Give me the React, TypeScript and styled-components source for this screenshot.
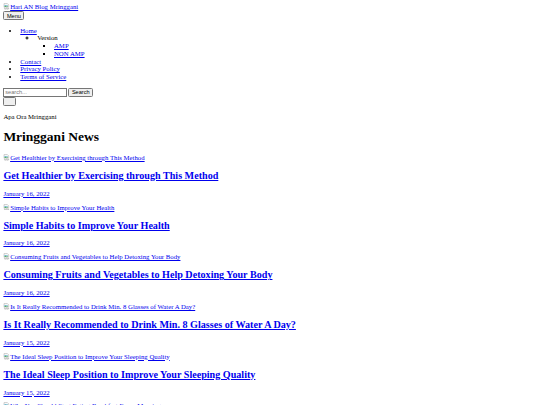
import styled, { createGlobalStyle } from "styled-components";

const GlobalStyle = createGlobalStyle`
  html {
    zoom: 0.421875;
  }
  body {
    margin: 8px;
    font-family: "Liberation Serif", "Times New Roman", serif;
    font-size: 16px;
    line-height: 1.15;
    color: #000;
    background: #fff;
  }
`;

const Link = styled.a`
  color: #0000ee;
  text-decoration: underline;
  cursor: pointer;
`;

const Header = styled.header`
  display: block;
`;

const Button = styled.button`
  font-family: "Liberation Sans", Arial, sans-serif;
  font-size: 13.333px;
  line-height: normal;
`;

const IconButton = styled(Button)`
  display: block;
  width: 31px;
  height: 22px;
`;

const List = styled.ul<{ $type: string; $top?: boolean }>`
  list-style-type: ${(p) => p.$type};
  margin: ${(p) => (p.$top ? "16px 0" : "0")};
  padding-left: 40px;
`;

const Bare = styled.li`
  list-style: none;
`;

const Form = styled.form`
  display: block;
  margin: 0;
`;

const Input = styled.input`
  font-family: "Liberation Sans", Arial, sans-serif;
  font-size: 13.333px;
  width: 150px;
`;

const Tagline = styled.p`
  margin: 16px 0;
`;

const Title = styled.h1`
  font-size: 32px;
  font-weight: bold;
  margin: 21.44px 0;
`;

const Article = styled.article`
  display: block;
`;

const PostTitle = styled.h2`
  font-size: 24px;
  font-weight: bold;
  margin: 19.5px 0;
`;

const PostDate = styled.p`
  margin: 16px 0 14.5px;
`;

const Broken = styled.span`
  display: inline;
`;

const BrokenIcon = styled.svg`
  width: 16px;
  height: 16px;
  vertical-align: -2px;
`;

const BrokenImage = ({ alt }: { alt: string }) => (
  <Broken>
    <BrokenIcon viewBox="0 0 16 16">
      <path d="M2.5 1.5h8l3 3v5l-2 1.5-2-1.5-2 1.5-2-1.5-2 1.5-1-1z" fill="#fff" stroke="#8a8a8a" />
      <path d="M3 5h8v3.5l-1.5 1-2-1.5-2 1.5L3 8.5z" fill="#8fc6e8" />
      <path d="M3 8l2.5-2 2.5 2 3-2v2.5l-1.5 1-2-1.5-2 1.5L3 8.5z" fill="#5aa845" />
      <path d="M3 13.5l1.5-1 2 1.5 2-1.5 2 1.5 2-1.5 1-0.5v2h-10.5z" fill="#fff" stroke="#8a8a8a" />
    </BrokenIcon>
    {alt}
  </Broken>
);

const posts = [
  { title: "Get Healthier by Exercising through This Method", date: "January 16, 2022" },
  { title: "Simple Habits to Improve Your Health", date: "January 16, 2022" },
  { title: "Consuming Fruits and Vegetables to Help Detoxing Your Body", date: "January 16, 2022" },
  { title: "Is It Really Recommended to Drink Min. 8 Glasses of Water A Day?", date: "January 15, 2022" },
  { title: "The Ideal Sleep Position to Improve Your Sleeping Quality", date: "January 15, 2022" },
  { title: "Why You Should Start Eating Breakfast Every Morning", date: "January 15, 2022" },
];

export default function App() {
  return (
    <>
      <GlobalStyle />
      <Header>
        <Link>
          <BrokenImage alt="Hari AN Blog Mringgani" />
        </Link>
      </Header>
      <Button>Menu</Button>
      <List $type="disc" $top>
        <li>
          <Link>Home</Link>
        </li>
        <Bare>
          <List $type="circle">
            <li>
              Version
              <List $type="square">
                <li>
                  <Link>AMP</Link>
                </li>
                <li>
                  <Link>NON AMP</Link>
                </li>
              </List>
            </li>
          </List>
        </Bare>
        <li>
          <Link>Contact</Link>
        </li>
        <li>
          <Link>Privacy Policy</Link>
        </li>
        <li>
          <Link>Terms of Service</Link>
        </li>
      </List>
      <Form onSubmit={(e) => e.preventDefault()}>
        <Input type="search" placeholder="search..." /> <Button>Search</Button>
      </Form>
      <IconButton aria-label="toggle" />
      <Tagline>Apa Ora Mringgani</Tagline>
      <Title>Mringgani News</Title>
      {posts.map((post) => (
        <Article key={post.title}>
          <Link>
            <BrokenImage alt={post.title} />
          </Link>
          <PostTitle>
            <Link>{post.title}</Link>
          </PostTitle>
          <PostDate>
            <Link>{post.date}</Link>
          </PostDate>
        </Article>
      ))}
    </>
  );
}
